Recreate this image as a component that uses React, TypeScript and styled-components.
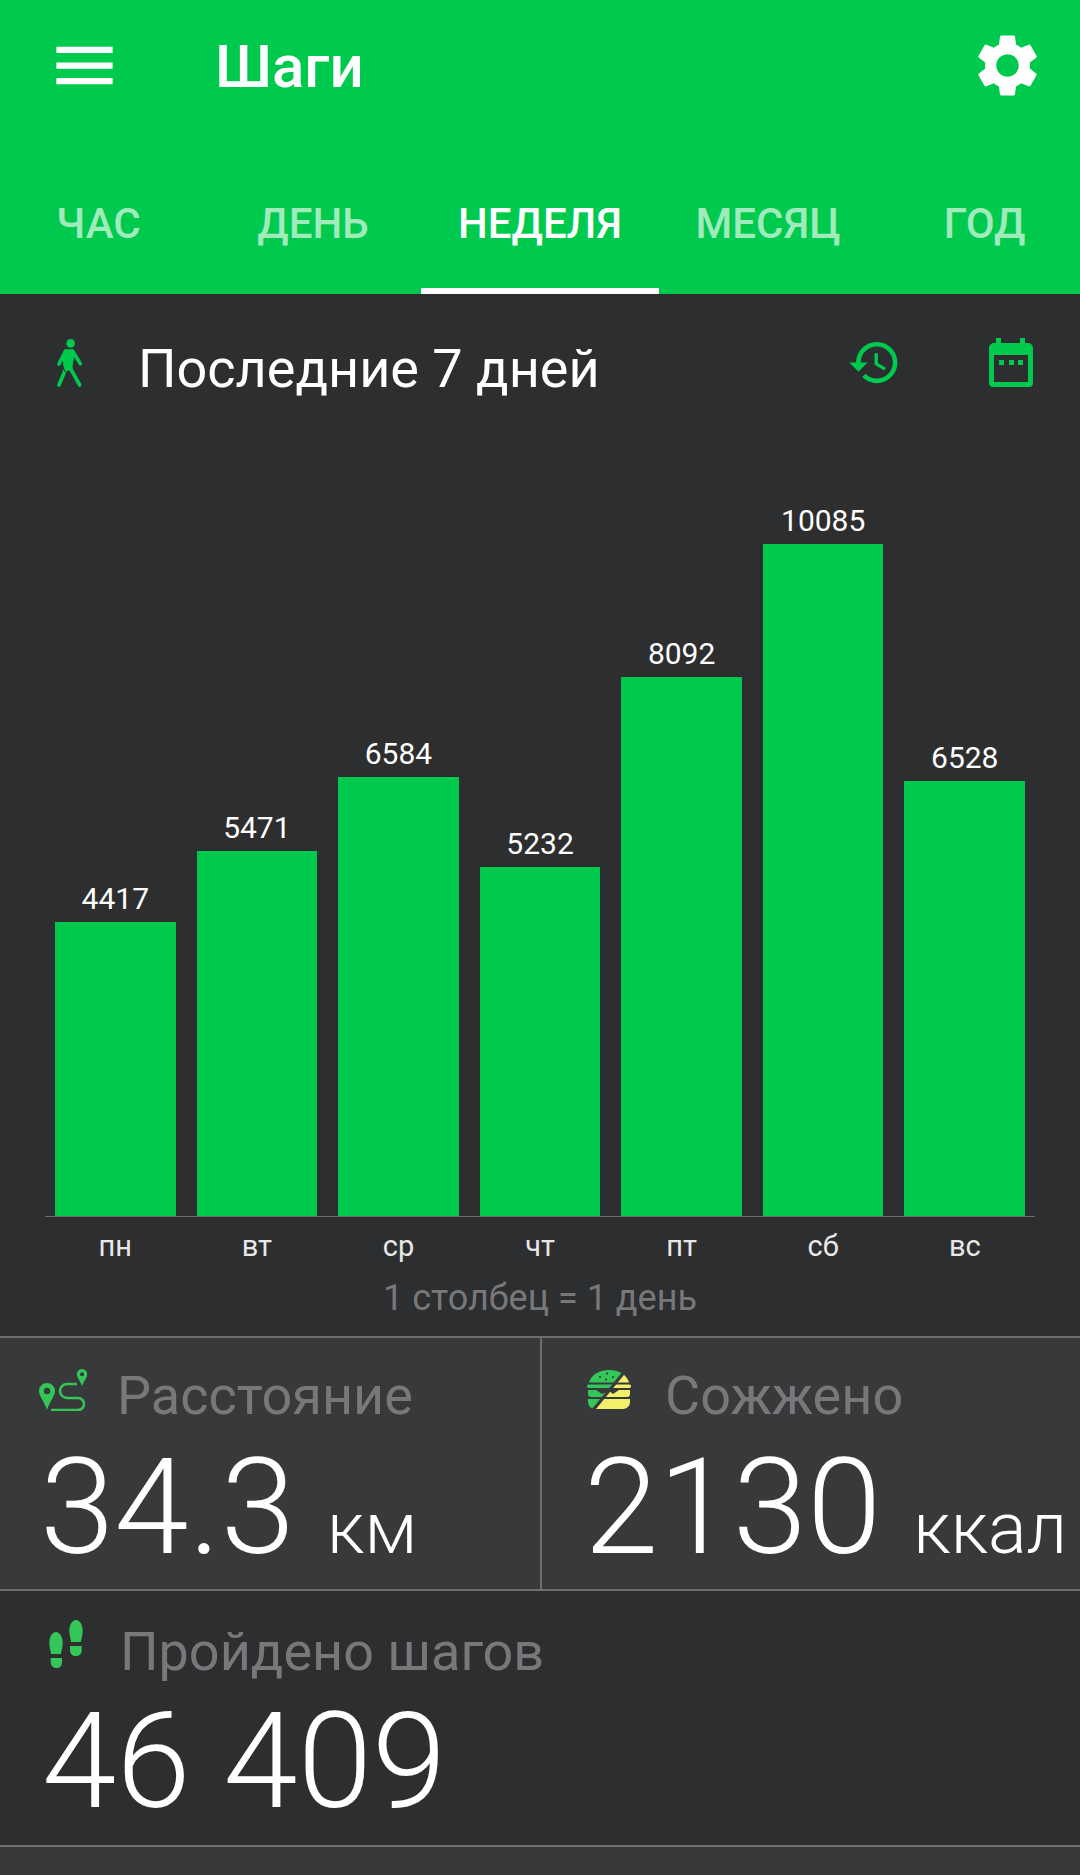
import { createGlobalStyle, styled } from "styled-components";

const GREEN = "#00ca4e";
const ICON_GREEN = "#33c75a";

const days = [
  { label: "пн", value: 4417 },
  { label: "вт", value: 5471 },
  { label: "ср", value: 6584 },
  { label: "чт", value: 5232 },
  { label: "пт", value: 8092 },
  { label: "сб", value: 10085 },
  { label: "вс", value: 6528 },
];

const tabs = [
  { label: "ЧАС", width: 197 },
  { label: "ДЕНЬ", width: 224, shift: 8 },
  { label: "НЕДЕЛЯ", width: 238, active: true },
  { label: "МЕСЯЦ", width: 218 },
  { label: "ГОД", width: 203, shift: 12 },
];

const PX_PER_STEP = 672 / 10085;

const GlobalStyle = createGlobalStyle`
  html, body {
    margin: 0;
    padding: 0;
    background: #2d2e30;
  }
  body {
    font-family: Roboto, "Liberation Sans", sans-serif;
  }
`;

const Page = styled.div`
  width: 1080px;
  height: 1875px;
  overflow: hidden;
  background: #2d2e30;
  color: #fff;
`;

const Header = styled.header`
  height: 294px;
  background: ${GREEN};
  display: flex;
  flex-direction: column;
`;

const Toolbar = styled.div`
  height: 174px;
  padding: 28px 35px 0 47px;
  box-sizing: border-box;
  display: flex;
  align-items: flex-start;
`;

const MenuIcon = styled.svg`
  width: 75px;
  height: 75px;
  fill: #fff;
`;

const Title = styled.h1`
  margin: 3px 0 0 93px;
  flex: 1;
  font-size: 60px;
  line-height: 72px;
  font-weight: 500;
`;

const TabBar = styled.nav`
  flex: 1;
  display: flex;
`;

const Tab = styled.div<{ $width: number; $active?: boolean; $shift?: number }>`
  width: ${(p) => p.$width}px;
  box-sizing: border-box;
  padding-left: ${(p) => p.$shift || 0}px;
  display: flex;
  align-items: center;
  justify-content: center;
  padding-bottom: 16px;
  font-size: 42px;
  font-weight: 500;
  color: ${(p) => (p.$active ? "#fff" : "rgba(255,255,255,0.63)")};
  border-bottom: 6px solid ${(p) => (p.$active ? "#fff" : "transparent")};
`;

const RangeRow = styled.div`
  height: 104px;
  padding: 26px 47px 0 30px;
  box-sizing: border-box;
  display: flex;
  align-items: flex-start;
`;

const WalkIcon = styled.svg`
  width: 70px;
  height: 80px;
  flex: none;
`;

const RangeTitle = styled.div`
  flex: 1;
  margin: 13px 0 0 38px;
  font-size: 54px;
  line-height: 72px;
  color: #fff;
`;

const HistoryIcon = styled.svg`
  width: 55px;
  height: 55px;
  margin: 15px 87px 0 0;
  fill: ${GREEN};
  flex: none;
`;

const CalendarIcon = styled.svg`
  width: 44px;
  height: 50px;
  margin: 18px 0 0 0;
  flex: none;
`;

const Chart = styled.div`
  margin: 0 45px;
  height: 818px;
  padding: 0 10px;
  display: flex;
  align-items: flex-end;
  gap: 21px;
  border-bottom: 1px solid #6d6e70;
`;

const BarColumn = styled.div`
  flex: 1;
  display: flex;
  flex-direction: column;
  align-items: center;
`;

const BarValue = styled.div`
  font-size: 30px;
  line-height: 40px;
  color: #fff;
  margin-bottom: 3px;
`;

const Bar = styled.div`
  width: 100%;
  background: ${GREEN};
`;

const AxisRow = styled.div`
  margin: 0 45px;
  padding: 12px 10px 0;
  display: flex;
  gap: 21px;
`;

const AxisLabel = styled.div`
  flex: 1;
  text-align: center;
  font-size: 29px;
  line-height: 34px;
  color: #e8e8e8;
`;

const Caption = styled.div`
  margin-top: 16px;
  height: 57px;
  text-align: center;
  font-size: 36px;
  line-height: 38px;
  color: #77787a;
`;

const TileRow = styled.section<{ $light?: boolean; $height: number }>`
  height: ${(p) => p.$height}px;
  box-sizing: border-box;
  display: flex;
  border-top: 2px solid #6d6e70;
  background: ${(p) => (p.$light ? "#38393b" : "#2d2e30")};
`;

const Tile = styled.div<{ $divider?: boolean; $left: number }>`
  flex: 0 0 540px;
  min-width: 0;
  box-sizing: border-box;
  padding-left: ${(p) => p.$left}px;
  border-left: ${(p) => (p.$divider ? "2px solid #6d6e70" : "none")};
`;

const TileHead = styled.div<{ $gap: number }>`
  display: flex;
  align-items: flex-start;
  gap: ${(p) => p.$gap}px;
  height: 95px;
`;

const TileIcon = styled.svg<{ $top: number }>`
  margin-top: ${(p) => p.$top}px;
  flex: none;
`;

const TileLabel = styled.div<{ $top: number }>`
  margin-top: ${(p) => p.$top}px;
  font-size: 54px;
  line-height: 58px;
  color: #77787a;
  white-space: nowrap;
`;

const Figure = styled.div<{ $indent: number; $top: number }>`
  margin: ${(p) => p.$top}px 0 0 ${(p) => p.$indent}px;
  display: flex;
  align-items: baseline;
  white-space: nowrap;
`;

const BigNumber = styled.span`
  font-size: 134px;
  line-height: 140px;
  font-weight: 300;
  color: #fff;
`;

const Unit = styled.span`
  margin-left: 32px;
  font-size: 72px;
  font-weight: 300;
  color: #fff;
`;

const Walker = () => (
  <WalkIcon viewBox="0 0 210 240">
    <circle cx="122" cy="70" r="13" fill={GREEN} />
    <path d="M104 88h26l2 22-6 42h-24l-4-34z" fill={GREEN} />
    <g fill="none" stroke={GREEN} strokeLinecap="round" strokeWidth="11">
      <path d="M106 94 87 132" />
      <path d="M128 94l23 37" />
      <path d="M108 145 87 195" />
      <path d="M113 130l36 65" />
    </g>
    <path d="M97 137l9 20" fill="none" stroke="#2d2e30" strokeWidth="3" />
  </WalkIcon>
);

const Calendar = () => (
  <CalendarIcon viewBox="0 0 44 50">
    <path
      d="M7 0h5v5h19V0h5v5h3a5 5 0 0 1 5 5v35a4 4 0 0 1-4 4H4a4 4 0 0 1-4-4V10a5 5 0 0 1 5-5h2z"
      fill={GREEN}
    />
    <rect x="5" y="17" width="34" height="27" fill="#2d2e30" />
    <rect x="10" y="22" width="5" height="5" fill={GREEN} />
    <rect x="20" y="22" width="5" height="5" fill={GREEN} />
    <rect x="29" y="22" width="5" height="5" fill={GREEN} />
  </CalendarIcon>
);

const RouteIcon = () => (
  <TileIcon $top={29} width="50" height="44" viewBox="0 0 50 44">
    <path
      d="M10 16a8 8 0 0 0-8 8c0 5 5 10 8 19 3-9 8-14 8-19a8 8 0 0 0-8-8zm0 4.800a3.200 3.200 0 1 1 0 6.400 3.200 3.200 0 0 1 0-6.400z"
      fill={ICON_GREEN}
      fillRule="evenodd"
    />
    <path
      d="M45 2a5.200 5.200 0 0 0-5.200 5.200c0 3.300 3.400 6.500 5.200 11.800 1.800-5.300 5.200-8.500 5.200-11.800A5.200 5.200 0 0 0 45 2zm0 3.200a2 2 0 1 1 0 4 2 2 0 0 1 0-4z"
      fill={ICON_GREEN}
      fillRule="evenodd"
    />
    <path
      d="M40 17H30a7 7 0 0 0 0 14h11a6 6 0 0 1 0 12H14"
      fill="none"
      stroke={ICON_GREEN}
      strokeWidth="2.500"
    />
  </TileIcon>
);

const BurgerLayers = () => (
  <>
    <path d="M2 12.500C4 5 12 0 22 0s18 5 20 12.500z" />
    <rect x="0" y="14.500" width="44" height="3.500" rx="1.700" />
    <path d="M1 20h8l6 4 7-3 4 3 6-4h11v4a3 3 0 0 1-3 3H4a3 3 0 0 1-3-3z" />
    <path d="M1 29h42v3a7 7 0 0 1-7 7H8a7 7 0 0 1-7-7z" />
  </>
);

const BurgerIcon = () => (
  <TileIcon $top={32} width="44" height="39" viewBox="0 0 44 39">
    <defs>
      <clipPath id="burger-left">
        <path d="M0 0h37L5 39H0z" />
      </clipPath>
      <clipPath id="burger-right">
        <path d="M41 0h3v39H9z" />
      </clipPath>
    </defs>
    <g fill={ICON_GREEN} clipPath="url(#burger-left)">
      <BurgerLayers />
    </g>
    <g fill="#f4ef6b" clipPath="url(#burger-right)">
      <BurgerLayers />
    </g>
    <circle cx="13" cy="7" r="1" fill="#2d2e30" />
    <circle cx="20" cy="3.500" r="1" fill="#2d2e30" />
    <circle cx="26" cy="7" r="1" fill="#2d2e30" />
    <circle cx="19" cy="9.500" r="1" fill="#2d2e30" />
  </TileIcon>
);

const StepsIcon = () => (
  <TileIcon $top={29} width="36" height="49" viewBox="0 0 36 49">
    <g fill={ICON_GREEN}>
      <path d="M7 12c4 0 6.700 5 6.700 11 0 5-1.700 8-1.700 11H2c0-3-1.700-6-1.700-11C.3 17 3 12 7 12z" />
      <path d="M1.700 38H13v4c0 4-2.500 6-5.500 6s-5.800-2-5.800-6z" />
      <path d="M27 0c4 0 6.700 5 6.700 11 0 5-1.700 8-1.700 11H22c0-3-1.700-6-1.700-11C20.300 5 23 0 27 0z" />
      <path d="M21 26h11.700v4c0 4-2.700 6-5.900 6S21 34 21 30z" />
    </g>
  </TileIcon>
);

export default function App() {
  return (
    <Page>
      <GlobalStyle />
      <Header>
        <Toolbar>
          <MenuIcon viewBox="0 0 24 24">
            <path d="M3 18h18v-2H3v2zm0-5h18v-2H3v2zm0-7v2h18V6H3z" />
          </MenuIcon>
          <Title>Шаги</Title>
          <MenuIcon viewBox="0 0 24 24">
            <path d="M19.140 12.940c.04-.3.060-.61.060-.94 0-.32-.020-.64-.070-.94l2.030-1.580c.18-.14.230-.41.120-.61l-1.920-3.320c-.12-.22-.37-.29-.59-.22l-2.390.96c-.5-.38-1.030-.7-1.620-.94l-.36-2.540c-.04-.24-.24-.41-.48-.41h-3.840c-.24 0-.43.170-.47.410l-.36 2.540c-.59.240-1.130.570-1.620.94l-2.390-.96c-.22-.080-.47 0-.59.220L2.740 8.870c-.12.210-.080.470.120.610l2.030 1.580c-.05.3-.09.630-.09.940s.020.640.070.940l-2.030 1.580c-.18.140-.23.410-.12.610l1.920 3.320c.12.220.37.290.59.220l2.390-.96c.5.380 1.030.7 1.620.94l.36 2.540c.05.240.24.410.48.410h3.840c.24 0 .44-.170.47-.410l.36-2.540c.59-.240 1.130-.560 1.620-.94l2.390.96c.22.080.47 0 .59-.220l1.920-3.320c.12-.22.070-.47-.12-.61l-2.010-1.580zM12 15.600c-1.980 0-3.600-1.620-3.600-3.600s1.620-3.600 3.600-3.600 3.600 1.620 3.600 3.600-1.620 3.600-3.600 3.600z" />
          </MenuIcon>
        </Toolbar>
        <TabBar>
          {tabs.map((t) => (
            <Tab key={t.label} $width={t.width} $active={t.active} $shift={t.shift}>
              {t.label}
            </Tab>
          ))}
        </TabBar>
      </Header>

      <RangeRow>
        <Walker />
        <RangeTitle>Последние 7 дней</RangeTitle>
        <HistoryIcon viewBox="0 0 24 24">
          <path d="M13 3c-4.970 0-9 4.030-9 9H1l3.890 3.890.07.14L9 12H6c0-3.870 3.130-7 7-7s7 3.130 7 7-3.130 7-7 7c-1.930 0-3.680-.79-4.940-2.060l-1.420 1.420C8.270 19.990 10.510 21 13 21c4.970 0 9-4.030 9-9s-4.030-9-9-9zm-1 5v5l4.280 2.540.72-1.210-3.500-2.080V8H12z" />
        </HistoryIcon>
        <Calendar />
      </RangeRow>

      <Chart>
        {days.map((d) => (
          <BarColumn key={d.label}>
            <BarValue>{d.value}</BarValue>
            <Bar style={{ height: Math.round(d.value * PX_PER_STEP) }} />
          </BarColumn>
        ))}
      </Chart>
      <AxisRow>
        {days.map((d) => (
          <AxisLabel key={d.label}>{d.label}</AxisLabel>
        ))}
      </AxisRow>
      <Caption>1 столбец = 1 день</Caption>

      <TileRow $light $height={253}>
        <Tile $left={37}>
          <TileHead $gap={30}>
            <RouteIcon />
            <TileLabel $top={29}>Расстояние</TileLabel>
          </TileHead>
          <Figure $indent={3} $top={5}>
            <BigNumber>34.3</BigNumber>
            <Unit>км</Unit>
          </Figure>
        </Tile>
        <Tile $divider $left={45}>
          <TileHead $gap={34}>
            <BurgerIcon />
            <TileLabel $top={29}>Сожжено</TileLabel>
          </TileHead>
          <Figure $indent={-3} $top={5}>
            <BigNumber>2130</BigNumber>
            <Unit>ккал</Unit>
          </Figure>
        </Tile>
      </TileRow>
      <TileRow $height={256}>
        <Tile $left={49}>
          <TileHead $gap={35}>
            <StepsIcon />
            <TileLabel $top={32}>Пройдено шагов</TileLabel>
          </TileHead>
          <Figure $indent={-7} $top={6}>
            <BigNumber>46 409</BigNumber>
          </Figure>
        </Tile>
      </TileRow>
      <TileRow $light $height={80} />
    </Page>
  );
}
